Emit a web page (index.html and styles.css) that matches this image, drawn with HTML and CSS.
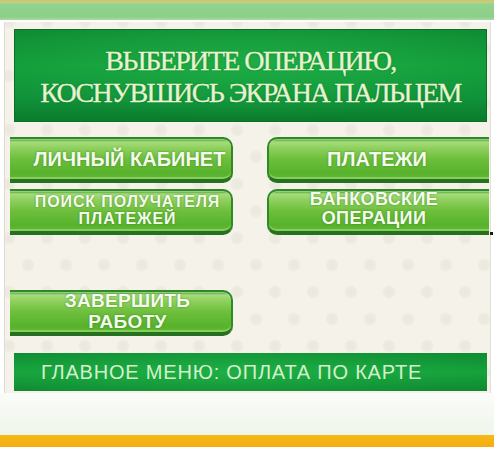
FILE: index.html
```html
<!DOCTYPE html>
<html lang="ru">
<head>
<meta charset="utf-8">
<title>Главное меню</title>
<link rel="stylesheet" href="styles.css">
</head>
<body>
<div class="page">
  <div class="topbar"></div>
  <div class="screen">
    <div class="title">
      <div>ВЫБЕРИТЕ ОПЕРАЦИЮ,</div>
      <div>КОСНУВШИСЬ ЭКРАНА ПАЛЬЦЕМ</div>
    </div>
    <div class="buttons">
      <div class="btn btn-left"><span class="ln">ЛИЧНЫЙ КАБИНЕТ</span></div>
      <div class="btn btn-right"><span class="ln">ПЛАТЕЖИ</span></div>
      <div class="btn btn-left two narrow"><span class="ln">ПОИСК ПОЛУЧАТЕЛЯ</span><span class="ln">ПЛАТЕЖЕЙ</span></div>
      <div class="btn btn-right two mark"><span class="ln">БАНКОВСКИЕ</span><span class="ln">ОПЕРАЦИИ</span></div>
    </div>
    <div class="btn btn-left two finish"><span class="ln">ЗАВЕРШИТЬ</span><span class="ln">РАБОТУ</span></div>
    <div class="footer">ГЛАВНОЕ МЕНЮ: ОПЛАТА ПО КАРТЕ</div>
  </div>
  <div class="bottom"></div>
  <div class="orange"></div>
</div>
</body>
</html>
```
FILE: styles.css
```css
html, body {
  margin: 0;
  padding: 0;
  background: #ffffff;
}
.page {
  width: 494px;
  height: 452px;
  overflow: hidden;
  display: flex;
  flex-direction: column;
}
.topbar {
  height: 20px;
  background: linear-gradient(#d2c36c 0, #c9cf7f 2px, #93d48e 4px, #8ccf88 17px, #a9dca3 20px);
  flex: none;
}
.screen {
  margin: 2px 3px 0 4px;
  height: 371px;
  flex: none;
  border-left: 1px solid #dcdad2;
  border-right: 1px solid #e2dfd6;
  background-color: #f5f2ea;
  background-image:
    radial-gradient(circle, #ebe8de 0, #edeae0 5px, rgba(245,242,234,0) 7px),
    radial-gradient(circle, #ebe8de 0, #edeae0 5px, rgba(245,242,234,0) 7px);
  background-size: 38px 54px, 38px 54px;
  background-position: 4px 0px, 23px 27px;
  display: flex;
  flex-direction: column;
  position: relative;
}
.title {
  margin: 7px 3px 0 9px;
  height: 93px;
  background:
    radial-gradient(ellipse 60% 60% at 50% 35%, rgba(40,190,80,0.5), rgba(40,190,80,0) 100%),
    linear-gradient(#0f8b33 0, #139c3a 40%, #10923a 75%, #0b7a2c 100%);
  box-shadow: inset 0 0 0 1px #0b6e27;
  color: #e6f3d0;
  font-family: "Liberation Serif", "Times New Roman", serif;
  font-size: 28px;
  letter-spacing: -1.6px;
  line-height: 32px;
  text-align: center;
  display: flex;
  flex-direction: column;
  justify-content: center;
  padding-top: 2px;
  box-sizing: border-box;
  -webkit-text-stroke: 0.3px #e6f3d0;
  text-shadow: 0 0 2px rgba(10,90,30,0.6);
}
.buttons {
  margin-top: 15px;
  display: grid;
  grid-template-columns: 223px 222px;
  column-gap: 34px;
  row-gap: 6px;
  padding-left: 5px;
}
.btn {
  height: 46px;
  box-sizing: border-box;
  border: 2px solid #2f8a26;
  border-bottom-width: 4px;
  border-bottom-color: #27701f;
  background: linear-gradient(#3f9e2a 0, #a6dc7c 3px, #8fd05e 9px, #6dbf3c 20px, #58b22c 34px, #62b836 40px);
  box-shadow: inset 0 1px 0 rgba(255,255,255,0.4), inset 0 -2px 0 rgba(170,230,130,0.5);
  color: #f4fbec;
  font-family: "Liberation Sans", Arial, sans-serif;
  font-weight: bold;
  font-size: 20px;
  letter-spacing: 0;
  text-align: center;
  display: flex;
  flex-direction: column;
  align-items: center;
  justify-content: center;
  text-shadow: 0 0 2px rgba(40,110,20,0.7);
  position: relative;
}
.ln {
  display: block;
  line-height: 20px;
  height: 20px;
  white-space: nowrap;
}
.btn-left {
  border-left: none;
  border-radius: 0 10px 10px 0;
  padding-left: 18px;
}
.btn-right {
  border-right: none;
  border-radius: 10px 0 0 10px;
  padding-right: 4px;
}
.btn.narrow {
  font-size: 16px;
  letter-spacing: 0.9px;
  padding-left: 14px;
}
.btn.narrow .ln {
  line-height: 17px;
  height: 17px;
}
.btn.narrow .ln:first-child {
  margin-top: -3px;
}
.btn.mark {
  font-size: 18px;
  letter-spacing: 0.4px;
  padding-right: 10px;
}
.btn.mark .ln {
  line-height: 19px;
  height: 19px;
}
.btn.mark .ln:first-child {
  margin-top: -5px;
}
.btn.mark::after {
  content: "";
  position: absolute;
  right: -4px;
  bottom: -4px;
  width: 3px;
  height: 3px;
  background: #1a1a1a;
}
.finish {
  width: 223px;
  margin-left: 5px;
  margin-top: 55px;
  font-size: 19px;
  letter-spacing: 0.3px;
  padding-left: 14px;
}
.finish .ln {
  line-height: 21px;
  height: 21px;
}
.finish .ln:first-child {
  margin-top: -2px;
}
.footer {
  margin: 17px 3px 0 9px;
  height: 38px;
  background:
    radial-gradient(ellipse 55% 90% at 45% 50%, rgba(40,190,80,0.45), rgba(40,190,80,0) 100%),
    linear-gradient(#0f8d33, #16a23c 50%, #0f8a31);
  color: #d6efcb;
  font-family: "Liberation Sans", Arial, sans-serif;
  font-size: 20px;
  line-height: 38px;
  padding-left: 27px;
  letter-spacing: 0.8px;
}
.bottom {
  height: 42px;
  flex: none;
  background: linear-gradient(#fbfcf9, #eff6ea);
}
.orange {
  height: 12px;
  flex: none;
  background: linear-gradient(#f6b817, #f4ae12);
}
```
